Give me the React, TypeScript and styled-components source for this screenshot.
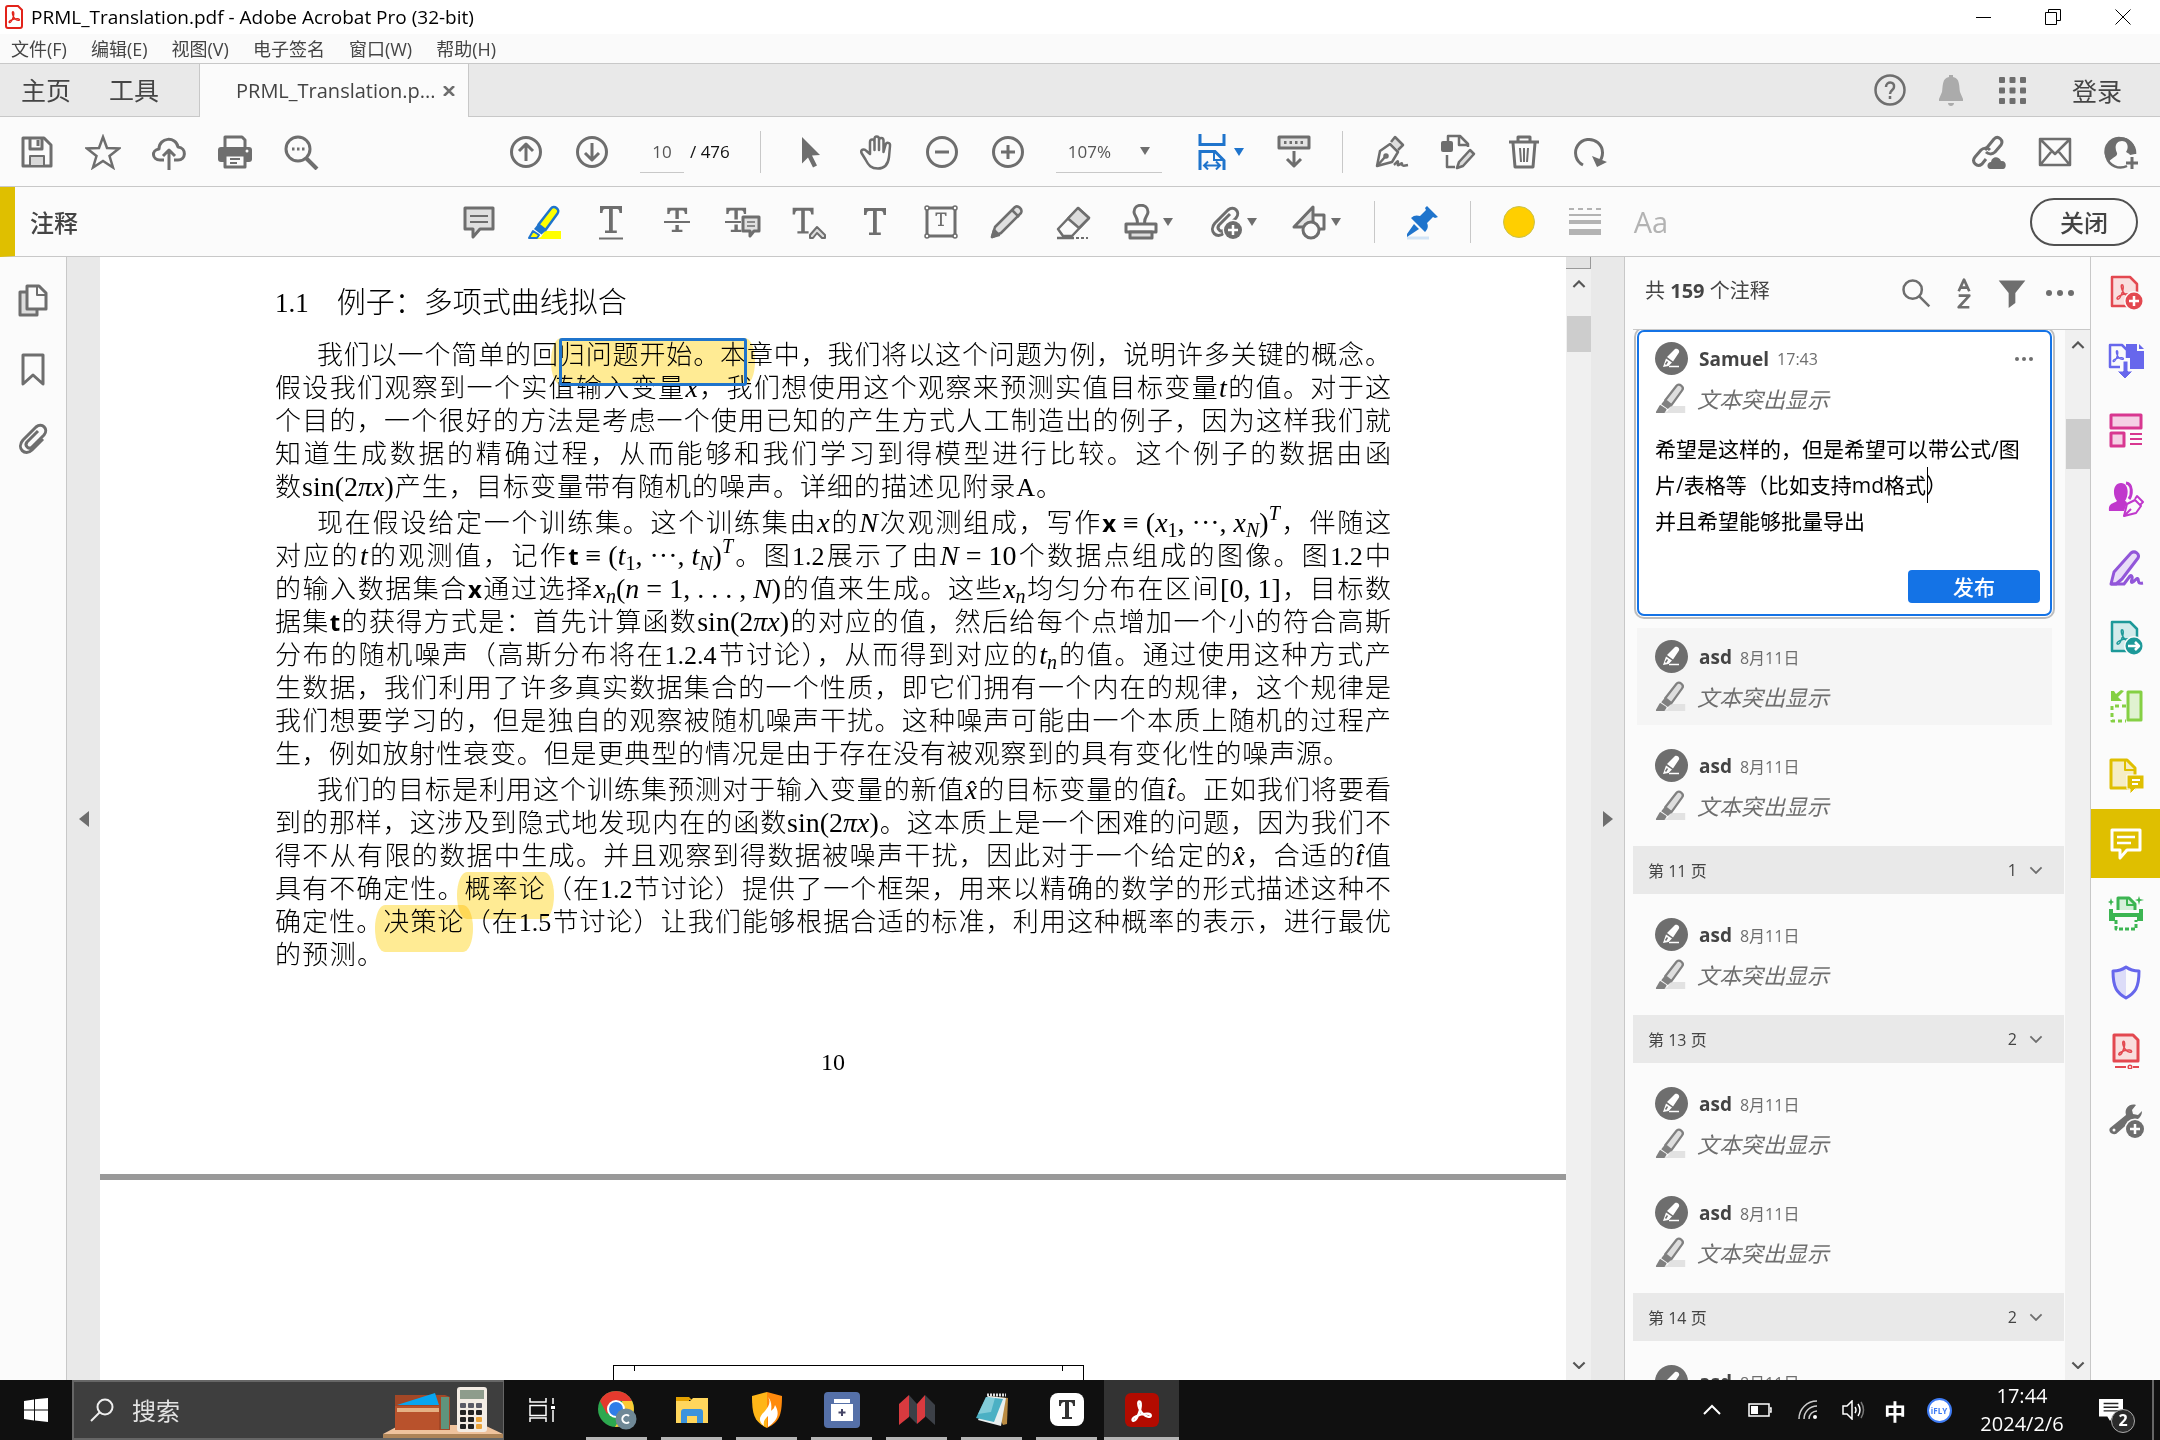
import React from "react";
import styled, { createGlobalStyle, css } from "styled-components";

const UI = `"Open Sans", "Noto Sans CJK SC", sans-serif`;
const SERIF = `"Liberation Serif", "Noto Sans CJK SC", serif`;
const GRAY = "#6e6e6e";
const LINE = "#c8c8c8";
const BLUE = "#1f74cc";
const GOLD = "#dfbf00";

const GlobalStyle = createGlobalStyle`
  *, *::before, *::after { box-sizing: border-box; }
  html, body { margin: 0; height: 100%; }
  body { font-family: ${UI}; color: #444; overflow: hidden; }
  button, input, select, textarea { font-family: inherit; color: inherit; }
  button { border: 0; background: none; padding: 0; }
  svg { display: block; flex: none; }
`;

const Window = styled.div`
  display: flex;
  flex-direction: column;
  height: 100vh;
  background: #fbfbfb;
`;

/* ---------- title bar and menus ---------- */
const TitleBar = styled.header`
  display: flex;
  align-items: center;
  height: 34px;
  padding-left: 5px;
  background: #fff;
  color: #000;
  font-size: 19px;
  line-height: 26px;
`;
const Title = styled.span`
  flex: 1;
  padding-left: 8px;
`;
const WindowButton = styled.button`
  display: flex;
  justify-content: center;
  align-items: center;
  width: 70px;
  height: 34px;
`;
const WindowButtons = styled.div`
  display: flex;
  margin-right: 2px;
`;
const MenuBar = styled.nav`
  display: flex;
  align-items: center;
  gap: 24px;
  height: 30px;
  padding: 0 11px;
  border-bottom: 1px solid ${LINE};
  background: #fafafa;
`;
const MenuItem = styled.button`
  font-size: 18px;
  line-height: 26px;
`;

/* ---------- tabs ---------- */
const TabBar = styled.div`
  display: flex;
  height: 53px;
  background: #e9e9e9;
`;
const TabSpace = styled.div`
  display: flex;
  align-items: center;
  border-bottom: 1px solid ${LINE};
`;
const HomeTabs = styled(TabSpace)`
  width: 199px;
  padding-left: 21px;
  gap: 38px;
`;
const HomeTab = styled.button`
  font-size: 25px;
  line-height: 32px;
`;
const FileTab = styled.div`
  display: flex;
  align-items: center;
  justify-content: space-between;
  width: 270px;
  padding: 0 11px 0 36px;
  border-left: 1px solid ${LINE};
  border-right: 1px solid ${LINE};
  background: #fbfbfb;
  font-size: 20px;
`;
const TabTools = styled(TabSpace)`
  flex: 1;
  justify-content: flex-end;
  padding-right: 38px;
`;
const SignIn = styled.button`
  margin-left: 29px;
  font-size: 25px;
`;

/* ---------- toolbars ---------- */
const ToolBar = styled.div`
  display: flex;
  align-items: center;
  height: 70px;
  border-bottom: 1px solid ${LINE};
`;
const ToolGroup = styled.div`
  display: flex;
  align-items: center;
`;
const StartGroup = styled(ToolGroup)`
  width: 493px;
  padding-left: 4px;
`;
const EndGroup = styled(ToolGroup)`
  margin-left: auto;
  padding-right: 6px;
`;
const Tool = styled.button<{ $w?: number }>`
  display: flex;
  align-items: center;
  justify-content: center;
  width: ${(p) => p.$w || 66}px;
  height: 48px;
`;
const CaretTool = styled(Tool)`
  width: 84px;
  gap: 4px;
`;
const Divider = styled.span<{ $l: number; $r: number }>`
  width: 1px;
  height: 42px;
  margin: 0 ${(p) => p.$r}px 0 ${(p) => p.$l}px;
  background: ${LINE};
`;
const PageField = styled.label`
  display: flex;
  align-items: center;
  margin-left: 15px;
  gap: 6px;
  color: #111;
  font-size: 17px;
`;
const PageInput = styled.input`
  width: 44px;
  height: 42px;
  border: 0;
  border-bottom: 1px solid ${LINE};
  background: none;
  color: #555;
  font-size: 17px;
  text-align: center;
`;
const ZoomField = styled.span`
  display: flex;
  align-items: center;
  width: 106px;
  height: 42px;
  margin: 0 15px;
  padding-right: 12px;
  border-bottom: 1px solid ${LINE};
`;
const ZoomSelect = styled.select`
  flex: 1;
  appearance: none;
  border: 0;
  background: none;
  padding-left: 12px;
  color: #555;
  font-size: 17px;
`;
const CommentBar = styled(ToolBar)`
  border-left: 15px solid ${GOLD};
`;
const BarTitle = styled.h1`
  width: 431px;
  margin: 0;
  padding-left: 15px;
  font-size: 24px;
  font-weight: 500;
`;
const CloseButton = styled.button`
  width: 108px;
  height: 48px;
  margin: 0 22px 0 auto;
  border: 2px solid #505050;
  border-radius: 24px;
  font-size: 24px;
  font-weight: 500;
`;
const TextStyleIcon = styled.span`
  color: #b3b3b3;
  font-size: 29px;
`;

/* ---------- body ---------- */
const Body = styled.main`
  display: flex;
  flex: 1;
  min-height: 0;
`;
const NavRail = styled.nav`
  display: flex;
  flex-direction: column;
  align-items: center;
  width: 67px;
  padding-top: 9px;
  border-right: 1px solid ${LINE};
`;
const NavButton = styled(Tool)`
  height: 69px;
`;
const Splitter = styled.button`
  display: flex;
  align-items: center;
  justify-content: center;
  width: 33px;
  background: #e9e9e9;
`;
const Viewer = styled.section`
  flex: 1;
  min-width: 0;
  overflow: hidden;
  background: #fff;
`;
const Page = styled.article`
  padding: 27px 175px 97px;
  border-bottom: 6px solid #999;
  color: #000;
  font-family: ${SERIF};
`;
const Heading = styled.h2`
  display: flex;
  gap: 28px;
  margin: 0 0 17px;
  font-size: 29px;
  font-weight: 300;
  line-height: 38px;
`;
const SectionNumber = styled.span`
  font-size: 27px;
`;
const Paragraph = styled.p`
  margin: 0 0 3px;
  font-size: 26px;
  font-weight: 300;
  line-height: 33px;
`;
const Line = styled.span<{ $indent?: boolean; $end?: number }>`
  display: block;
  height: 33px;
  padding-left: ${(p) => (p.$indent ? 42 : 0)}px;
  padding-right: ${(p) => p.$end || 0}px;
  text-align: justify;
  text-align-last: justify;
  white-space: nowrap;
`;
const Formula = styled.span`
  display: inline-block;
  font-size: 28px;
  line-height: 24px;
  white-space: pre;
  i { font-style: italic; }
  sub, sup { font-size: 20px; line-height: 0; }
  sub { vertical-align: -5px; }
  sup { vertical-align: 12px; }
  b { font-family: "Open Sans", sans-serif; font-size: 24px; font-weight: 700; line-height: 0; }
`;
const Mark = styled.mark<{ $framed?: boolean }>`
  position: relative;
  background: none;
  color: inherit;
  &::before {
    content: "";
    position: absolute;
    left: -8px;
    right: -8px;
    top: -3px;
    height: 47px;
    border-radius: 10px / 23px;
    background: #ffeb94;
    mix-blend-mode: multiply;
  }
  ${(p) =>
    p.$framed &&
    css`
      &::after {
        content: "";
        position: absolute;
        left: 0;
        right: 0;
        top: -3px;
        height: 48px;
        border: 3px solid ${BLUE};
        border-radius: 3px;
      }
    `}
`;
const PageNumber = styled.footer`
  margin-top: 75px;
  font-size: 24px;
  line-height: 30px;
  text-align: center;
`;
const NextPage = styled.div`
  padding: 185px 482px 0 513px;
`;
const Figure = styled.div`
  display: flex;
  justify-content: space-between;
  height: 200px;
  padding: 0 20px;
  border: 1px solid #000;
`;
const Tick = styled.span`
  width: 1px;
  height: 5px;
  background: #000;
`;

const ScrollTrack = styled.div`
  display: flex;
  flex-direction: column;
  align-items: center;
  width: 25px;
  background: #f0f0f0;
`;
const SplitBox = styled.span`
  width: 100%;
  height: 12px;
  border: solid #999;
  border-width: 0 1px 1px 0;
  background: #e3e3e3;
`;
const ScrollButton = styled.button`
  display: flex;
  align-items: center;
  justify-content: center;
  width: 24px;
  height: 30px;
`;
const Thumb = styled.span<{ $gap: number; $h: number }>`
  width: 24px;
  height: ${(p) => p.$h}px;
  margin: ${(p) => p.$gap}px 0 auto;
  background: #cdcdcd;
`;

/* ---------- comments ---------- */
const Panel = styled.aside`
  display: flex;
  flex-direction: column;
  width: 467px;
  border: solid ${LINE};
  border-width: 0 1px;
`;
const PanelHead = styled.div`
  display: flex;
  align-items: center;
  height: 73px;
  margin-left: 8px;
  padding: 0 6px 0 12px;
  border-bottom: 1px solid ${LINE};
`;
const Count = styled.h2`
  flex: 1;
  margin: 0;
  padding-bottom: 8px;
  font-size: 20px;
  font-weight: 400;
`;
const PanelBody = styled.div`
  display: flex;
  flex: 1;
  min-height: 0;
`;
const List = styled.div`
  display: flex;
  flex: 1;
  flex-direction: column;
  gap: 12px;
  overflow: hidden;
  padding: 0 1px 0 8px;
`;
const Card = styled.article<{ $hover?: boolean; $active?: boolean }>`
  flex: none;
  margin: 0 12px 0 4px;
  padding: 12px 18px;
  height: ${(p) => (p.$active ? "auto" : "97px")};
  background: ${(p) => (p.$active ? "#fff" : p.$hover ? "#f5f5f5" : "none")};
  ${(p) =>
    p.$active &&
    css`
      padding: 10px 10px 11px 16px;
      border: 2px solid #1473e6;
      border-radius: 7px;
      box-shadow: 0 0 0 1px #fff, 0 0 0 3px #bdbdbd;
    `}
`;
const CardRow = styled.div`
  display: flex;
  align-items: center;
  height: 33px;
`;
const KindRow = styled(CardRow)`
  margin-top: 6px;
  gap: 10px;
  color: ${GRAY};
  font-size: 22px;
  font-style: italic;
`;
const Author = styled.b`
  margin-left: 11px;
  font-size: 19px;
`;
const Time = styled.time`
  margin-left: 8px;
  color: ${GRAY};
  font-size: 16px;
`;
const More = styled.button`
  margin: 0 7px 0 auto;
`;
const Draft = styled.div`
  position: relative;
  margin-top: 17px;
`;
const DraftText = styled.textarea`
  display: block;
  width: 380px;
  height: 122px;
  padding: 0;
  border: 0;
  outline: 0;
  resize: none;
  overflow: hidden;
  background: none;
  color: #000;
  font-size: 21px;
  line-height: 36px;
`;
const TextCaret = styled.span`
  position: absolute;
  left: 272px;
  top: 36px;
  width: 1px;
  height: 36px;
  background: #000;
`;
const Post = styled.button`
  display: block;
  width: 132px;
  height: 33px;
  margin: 17px 0 0 auto;
  border-radius: 4px;
  background: #1473e6;
  color: #fff;
  font-size: 21px;
  font-weight: 500;
  line-height: 30px;
`;
const PageHead = styled.button`
  display: flex;
  flex: none;
  align-items: center;
  height: 48px;
  padding: 0 21px 0 15px;
  background: #e9e9e9;
  font-size: 16px;
  gap: 12px;
  span:first-child { margin-right: auto; }
`;
const ToolRail = styled.nav`
  width: 69px;
`;
const RailButton = styled.button<{ $on?: boolean }>`
  display: flex;
  align-items: center;
  justify-content: center;
  width: 69px;
  height: 69px;
  background: ${(p) => (p.$on ? GOLD : "none")};
`;

/* ---------- taskbar ---------- */
const TaskBar = styled.footer`
  display: flex;
  height: 60px;
  background: #101010;
  color: #fff;
`;
const Start = styled.button`
  display: flex;
  align-items: center;
  justify-content: center;
  width: 72px;
`;
const SearchBox = styled.label`
  display: flex;
  align-items: center;
  width: 432px;
  padding-left: 16px;
  border: 2px solid #666;
  border-right-width: 1px;
  background: #3e3e3e;
  overflow: hidden;
`;
const SearchInput = styled.input`
  flex: 1;
  min-width: 0;
  margin-left: 18px;
  padding: 0;
  border: 0;
  background: none;
  font-size: 24px;
  &::placeholder { color: #e3e3e3; opacity: 1; }
`;
const TaskApp = styled.button<{ $on?: boolean; $running?: boolean }>`
  display: flex;
  align-items: center;
  justify-content: center;
  width: 75px;
  background: linear-gradient(#b5b5b5, #b5b5b5) center bottom /
    ${(p) => (p.$on ? "100%" : p.$running ? "61px" : "0")} 3px no-repeat
    ${(p) => (p.$on ? "#333" : "transparent")};
`;
const Tray = styled.div`
  display: flex;
  align-items: center;
  margin-left: auto;
  padding-right: 6px;
`;
const TrayIcon = styled.button<{ $w: number }>`
  display: flex;
  align-items: center;
  justify-content: center;
  width: ${(p) => p.$w}px;
  height: 60px;
  font-size: 22px;
  font-weight: 700;
  color: #fff;
`;
const IFly = styled.span`
  width: 25px;
  height: 25px;
  border: 2px solid #3f7cf4;
  border-radius: 50%;
  background: #fff;
  color: #3f7cf4;
  font-size: 8px;
  line-height: 21px;
`;
const Clock = styled.time`
  width: 116px;
  font-size: 20px;
  line-height: 28px;
  text-align: center;
`;
const Notice = styled(TrayIcon)`
  position: relative;
  padding-right: 10px;
  border-right: 2px solid #666;
`;
const Badge = styled.span`
  position: absolute;
  left: 31px;
  top: 29px;
  width: 24px;
  height: 24px;
  border: 1px solid #aaa;
  border-radius: 50%;
  background: #2b2b2b;
  font-size: 16px;
  line-height: 21px;
`;

/* ---------- icons ---------- */
type IconProps = { children: React.ReactNode; color?: string; size?: number; sw?: number };
const Icon = ({ children, color = GRAY, size = 36, sw = 3 }: IconProps) => (
  <svg width={size} height={size} viewBox="0 0 36 36" fill="none" stroke={color} strokeWidth={sw} strokeLinejoin="round">
    {children}
  </svg>
);
const Caret = ({ color = GRAY }: { color?: string }) => (
  <svg width="10" height="8" viewBox="0 0 10 8"><path d="M0 0h10L5 8z" fill={color} /></svg>
);
const Side = ({ left }: { left?: boolean }) => (
  <svg width="10" height="16" viewBox="0 0 10 16"><path d={left ? "M10 0v16L0 8z" : "M0 0v16l10-8z"} fill={GRAY} /></svg>
);
const Chevron = ({ up, size = 14, color = "#555", sw = 3 }: { up?: boolean; size?: number; color?: string; sw?: number }) => (
  <svg width={size} height={size * 0.6} viewBox="0 0 20 12" fill="none" stroke={color} strokeWidth={sw}>
    <path d={up ? "M2 10l8-8 8 8" : "M2 2l8 8 8-8"} />
  </svg>
);
const TREFOIL = "M7 19c-2 1-3 3-1.500 3.500 2 .5 4.500-5 6-10 1-4 .5-7-.8-7s-1.200 3 0 6c1.500 4 5 7 8 7.500 3 .3 2.500-2.500-.5-2.700-3.500-.2-8 1-11.200 2.700z";
const Trefoil = ({ x, y, s, color, sw = 2 }: { x: number; y: number; s: number; color: string; sw?: number }) => (
  <path d={TREFOIL} transform={`translate(${x} ${y}) scale(${s})`} stroke={color} strokeWidth={sw} fill="none" />
);
const T = ({ x = 0, y = 0, s = 1 }: { x?: number; y?: number; s?: number }) => (
  <path
    transform={`translate(${x} ${y}) scale(${s})`}
    d="M7 3h22v7h-2.500c-.2-2.500-.8-4-2.500-4h-4.200v21.500h4V30H12v-2.500h4V6h-4c-1.700 0-2.300 1.500-2.500 4H7z"
    fill={GRAY} stroke="none"
  />
);
const HighlighterIcon = ({ stroke = "#808080", fill = "#dedede", ground = "#e2e2e2", size = 32 }) => (
  <Icon color={stroke} size={size} sw={2.5}>
    <path d="M14 33l4-6h16v8H8z" fill={ground} stroke="none" />
    <path d="M11.500 20.500L24 4.500c3-4 9.500 1 6.500 5L18.500 26z" fill={fill} />
    <path d="M11 20l8 6.500-4.500 4-7.500-5.500z" fill={stroke} stroke="none" />
    <path d="M6 27l6 4-2 3H2z" fill={fill === "#ffff00" ? fill : stroke} strokeWidth={2} />
  </Icon>
);
const AvatarIcon = () => (
  <svg width="33" height="33" viewBox="0 0 33 33">
    <circle cx="16.500" cy="16.500" r="16.500" fill={GRAY} />
    <path d="M12 15l8-8c2-1 5 1 4 3.500l-6 9zM11 16.500l6 4-3.500 3.500L8 25z" fill="#fff" />
    <path d="M14 24.500h10" stroke="#fff" strokeWidth="1.500" />
    <path d="M10.500 22.500l2-3" stroke={GRAY} strokeWidth="1.500" />
  </svg>
);
const Dots = ({ r = 3, gap = 12 }: { r?: number; gap?: number }) => (
  <svg width={gap * 2 + r * 2} height={r * 2}>
    {[0, 1, 2].map((i) => <circle key={i} cx={r + i * gap} cy={r} r={r} fill={GRAY} />)}
  </svg>
);
const ClipPath = () => <path d="M23 10L12 21c-3 4 2 8 5 5L29 14c5-6-2-13-8-8L8 19c-7 8 2 17 9 10l11-11" />;

const saveIcon = <Icon><path d="M4 4h21l7 7v21H4z" /><path d="M11 5v10h12V5" /><path d="M19 6v6" /><path d="M11 31V22h14v9" fill="#d9d9d9" strokeWidth={2} /></Icon>;
const starIcon = <Icon sw={2.500}><path d="M18 3l4 11 12 .5-9.500 7.500 3.500 11.500L18 27 8 33.500 11.500 22 2 14.500 14 14z" strokeLinejoin="miter" /></Icon>;
const cloudIcon = <Icon><path d="M13 26H9C1 26 0 16 8 15 8 3 25 2 27 13c9 1 8 13 0 13h-4" /><path d="M18 36V17M12 22l6-6 6 6" /></Icon>;
const printIcon = <Icon><path d="M8 14V3h17l3 3v8" /><path d="M4 13h28a3 3 0 013 3v9a3 3 0 01-3 3H4a3 3 0 01-3-3v-9a3 3 0 013-3z" fill={GRAY} stroke="none" /><path d="M8 21h20v12H8z" fill="#fbfbfb" /><path d="M13 25h10M13 29h7" strokeWidth={2} /><circle cx="30" cy="17" r="1.500" fill="#fff" stroke="none" /></Icon>;
const findIcon = <Icon><circle cx="15" cy="15" r="12" /><path d="M23 24l11 11" strokeWidth={4} /><path d="M9 15h2.500M14 15h2.500M19 15h2.500" /></Icon>;
const upIcon = <Icon><circle cx="18" cy="18" r="14.500" /><path d="M18 27V11M11 17l7-7 7 7" /></Icon>;
const downIcon = <Icon><circle cx="18" cy="18" r="14.500" /><path d="M18 9v16M11 19l7 7 7-7" /></Icon>;
const pointerIcon = <Icon><path d="M10 3l18 18-8 .5 5 10-4 2-5-10-6 6z" fill={GRAY} stroke="none" /></Icon>;
const handIcon = <Icon sw={2.500}><path d="M12 20V8c0-3.500 4.500-3.500 4.500 0v8V5c0-3.500 4.500-3.500 4.500 0v11V6.500c0-3.500 4.500-3.500 4.500 0V18l2-7c1-3.500 5-2.500 4.500 1L31 23c-1 8-5 11.500-11 11.500-7 0-9.500-3-12.500-9L3.500 19c-1.500-3 2.500-5 5-2z" /></Icon>;
const minusIcon = <Icon><circle cx="18" cy="18" r="14.500" /><path d="M11 18h14" /></Icon>;
const plusIcon = <Icon><circle cx="18" cy="18" r="14.500" /><path d="M11 18h14M18 11v14" /></Icon>;
const fitIcon = <svg width="36" height="36" viewBox="-4 0 36 36" fill="none" stroke={BLUE} strokeWidth="3"><path d="M2 0v10.500h24V0" /><path d="M2 36V17.500h15l9 9V36" /><path d="M16 17v9h9" strokeWidth="2" /><path d="M6 31.500h16M10 27.500l-4 4 4 4M18 27.500l4 4-4 4" strokeWidth="2" /></svg>;
const keysIcon = <Icon><path d="M3 3h30v11H3z" fill="#e3e3e3" /><path d="M8 8.500h2.500M13.500 8.500H16M19 8.500h2.500M24.500 8.500H27" /><path d="M18 17v15M11 25l7 7 7-7" /></Icon>;
const signIcon = <Icon sw={2.500}><path d="M3 32L6 17l10-7 8 8-6 10z" /><path d="M3 32l8-9" /><circle cx="12" cy="22" r="1.500" /><path d="M17 8l4-5 8 8-5 5" fill="#ddd" /><path d="M20 31c2-2 4-5 4-3s-1 4 1 3 3-3 3-1 1 2 6 1" /></Icon>;
const editPageIcon = <Icon sw={2.500}><path d="M8 12V2h12l8 8v3" /><path d="M19 3v8h8" /><rect x="1" y="7" width="12" height="11" rx="2" fill={GRAY} stroke="none" /><path d="M7 21v12h8" /><path d="M17 34l2-6 11-12 4 4-11 12z" fill="#ddd" strokeWidth={2.500} /></Icon>;
const trashIcon = <Icon><path d="M3 8h30M12 7V3h12v4" /><path d="M7 9l2 24h18l2-24" /><path d="M14 14l1 14M18 14v14M22 14l-1 14" strokeWidth={2} /></Icon>;
const rotateIcon = <Icon><path d="M11 31A13.500 13.500 0 1126 29" /><path d="M20 22l5 11 10-5z" fill={GRAY} stroke="none" /></Icon>;
const linkCloudIcon = <Icon sw={3}><path d="M14 16l9-11c4-4 10 1 7 6l-6 7c-3 3-7 2-9 0" /><path d="M19 16c-3-3-7-2-9 0l-6 7c-4 5 2 11 7 7l4-5" /><path d="M19 35c-4-1-3-7 1-7 1-6 8-6 10-1 6-1 6 8 2 8z" fill={GRAY} stroke="none" /></Icon>;
const mailIcon = <Icon sw={2.500}><path d="M3 5h30v26H3zM4 6l14 14L32 6M4 30l10-12M32 30L22 18" /></Icon>;
const userIcon = <Icon><path d="M24 32A14.500 14.500 0 1132 20" strokeWidth={2.500} /><path d="M6 28A14.500 14.500 0 0118 3a14.500 14.500 0 0114 17l-5 1c-1-2-3-2-4-3 3-4 2-11-4-11s-8 6-5 12c1 4-5 4-8 9z" fill={GRAY} stroke="none" /><path d="M29 23v12M23 29h12" /></Icon>;

const noteIcon = <Icon><path d="M4 4h28v21H19l-7 8v-8H4z" fill="#e0e0e0" /><path d="M9 12h18M9 18h18" strokeWidth={2} /></Icon>;
const underlineIcon = <Icon><T y={-1} /><path d="M6 34.500h24" strokeWidth={2} /></Icon>;
const strikeIcon = <Icon><T x={2} y={1} s={0.900} /><path d="M4 18h28" stroke="#fbfbfb" strokeWidth={6} /><path d="M5 18h26" strokeWidth={2} /></Icon>;
const replaceIcon = <Icon><T x={-5} y={1} s={0.900} /><path d="M0 18h16" stroke="#fbfbfb" strokeWidth={5} /><path d="M0 18h16" strokeWidth={2} /><path d="M18 13h16v14h-5l-4 5v-5h-7z" fill="#e0e0e0" /><path d="M22 18h8M22 22h8" strokeWidth={1.500} /></Icon>;
const insertIcon = <Icon><T x={-5} y={1} s={0.950} /><path d="M19 34v-3l7-8 8 8v3h-3l-5-5-4 5z" fill="#ddd" strokeWidth={2} /></Icon>;
const textIcon = <Icon><T y={1} s={1} /></Icon>;
const textBoxIcon = <Icon><path d="M4 4h28v28H4z" fill="#fbfbfb" /><T x={9} y={7} s={0.500} />{[[4, 4], [32, 4], [4, 32], [32, 32]].map(([x, y]) => <circle key={x * 40 + y} cx={x} cy={y} r="2" fill="#fff" strokeWidth={1.500} />)}</Icon>;
const pencilIcon = <Icon sw={2.500}><path d="M3 33l3-10L26 3c3-2 8 2 6 6L12 29z" fill="#e0e0e0" /><path d="M3 33l2-7 5 5z" fill={GRAY} /><path d="M23 6l7 7" /></Icon>;
const eraserIcon = <Icon sw={2.500}><path d="M3 25L23 4l11 10-17 18H8z" /><path d="M13 14.500L23 4l11 10-10 10z" fill="#ddd" /><path d="M2 34h17" /><path d="M21 34h12" strokeDasharray="3 2" strokeWidth={2} /></Icon>;
const stampIcon = <Icon><path d="M14 20c2-6-3-8-3-12 0-9 14-9 14 0 0 4-5 6-3 12" /><path d="M3 20h30v8H3z" /><path d="M7 28h22v6H7z" fill="#ddd" /></Icon>;
const attachIcon = <Icon><ClipPath /><circle cx="26" cy="26" r="10.500" fill="#fbfbfb" stroke="none" /><circle cx="26" cy="26" r="9" fill={GRAY} stroke="none" /><path d="M26 21v10M21 26h10" stroke="#fff" strokeWidth={2.500} /></Icon>;
const shapesIcon = <Icon><path d="M22 3v20H3z" fill="#e3e3e3" /><path d="M22 11h11v14H22" /><circle cx="20" cy="26" r="8" fill="#fbfbfb" /></Icon>;
const pinIcon = <Icon><path d="M3 34h22" stroke="#d3e4f5" /><path d="M23 2l11 11-3 1-2-1-6 6c2 4 0 7-2 9L7 14c3-3 6-3 9-2l6-6-1-2zM10 20l5 5L3 33v-3z" fill={BLUE} stroke="none" /></Icon>;
const colorIcon = <Icon sw={1}><circle cx="18" cy="18" r="15.500" fill="#ffcf00" stroke="#c9c14d" /></Icon>;
const linesIcon = <Icon color="#b3b3b3"><path d="M2 5h32" strokeWidth={2} strokeDasharray="5 4" /><path d="M2 11h32" strokeWidth={2} /><path d="M2 18h32" strokeWidth={4} /><path d="M2 28h32" strokeWidth={6} /></Icon>;

const pagesIcon = <Icon sw={3}><path d="M12 9H5v23h17v-5" fill="#ddd" /><path d="M12 3h12l7 7v16H12z" fill="#fbfbfb" /><path d="M22 4v8h8" strokeWidth={2} /></Icon>;
const bookmarkIcon = <Icon><path d="M8 3h20v29l-10-9-10 9z" /></Icon>;
const clipIcon = <Icon><ClipPath /></Icon>;

const PdfSheet = ({ color, tint }: { color: string; tint: string }) => (
  <>
    <path d="M4 3h18l7 7v22H4z" fill={tint} />
    <Trefoil x={5} y={6} s={0.850} color={color} sw={1.800} />
  </>
);
const RED = "#e34850";
const TEAL = "#1d9999";
const VIOLET = "#6767ec";
const PINK = "#d83790";
const railIcons: { name: string; icon: React.ReactNode; on?: boolean }[] = [
  { name: "创建 PDF", icon: <Icon color={RED} sw={2.500}><PdfSheet color={RED} tint="#f9dede" /><circle cx="26" cy="27" r="10" fill="#fbfbfb" stroke="none" /><circle cx="26" cy="27" r="8.500" fill={RED} stroke="none" /><path d="M26 22v10M21 27h10" stroke="#fff" /></Icon> },
  { name: "合并文件", icon: <Icon color={VIOLET} sw={2.500}><path d="M18 1h11v7h7v18H22V15h-4z" fill={VIOLET} stroke="none" /><path d="M31 1l5 5h-5z" fill={VIOLET} stroke="none" /><path d="M12 24H2V2h12l5 5v8" fill="#fbfbfb" /><Trefoil x={2} y={4} s={0.650} color={VIOLET} /><path d="M15 18h5v10h5l-8 8-8-8h6z" fill={VIOLET} stroke="#fbfbfb" strokeWidth={1} /></Icon> },
  { name: "组织页面", icon: <Icon color={PINK}><path d="M3 3h30v13H3zM3 21h13v13H3z" fill="#f5d0e5" /><path d="M22 22h12M22 27h12M22 32h12" strokeWidth={2} /></Icon> },
  { name: "请求签名", icon: <Icon color="#c038cc" sw={2}><path d="M1 30c-1-8 4-7 8-10-5-6-4-18 4-18s8 12 4 18c3 1 2 2-1 10z" fill="#c038cc" stroke="none" /><path d="M18 2c7 1 6 12 3 16" strokeWidth={3} /><path d="M16 35l3-12 8-4 6 6-5 7z" fill="#fbfbfb" /><path d="M16 35l7-7M27 18l2-3 6 6-3 3" /></Icon> },
  { name: "填写和签名", icon: <Icon color="#9256d9"><path d="M3 34l3-12L23 3c4-3 9 1 7 5L14 29l-6 5z" fill="#e9ddf7" /><path d="M3 34h13l6-8c1-1 3 0 2 3s-1 4 1 3 4-5 5-3-1 5 5 4" /></Icon> },
  { name: "导出 PDF", icon: <Icon color={TEAL} sw={2.500}><PdfSheet color={TEAL} tint="#d2ebeb" /><circle cx="26" cy="27" r="10" fill="#fbfbfb" stroke="none" /><circle cx="26" cy="27" r="8.500" fill={TEAL} stroke="none" /><path d="M20 27h11M27 23l4 4-4 4" stroke="#fff" /></Icon> },
  { name: "裁剪", icon: <Icon color="#85d044"><path d="M20 4h13v28H20z" fill="#e0f2d1" /><path d="M18 18H4v15h14" strokeDasharray="4 3" /><path d="M3 13V3h3l2 3 5-4 3 1-6 6 4 4z" fill="#85d044" stroke="none" /></Icon> },
  { name: "发送以供注释", icon: <Icon color={GOLD}><path d="M3 3h16l8 8v20H3z" fill="#f5edc5" /><path d="M17 4v9h9" strokeWidth={2} /><path d="M19 18h17v14H27l-5 5v-5h-3z" fill={GOLD} stroke="#fbfbfb" strokeWidth={1} /><path d="M24 23h8M24 27h6" stroke="#fff" strokeWidth={2} /></Icon> },
  { name: "注释", on: true, icon: <Icon color="#fff"><path d="M4 4h28v20H19l-7 8v-8H4z" /><path d="M9 11h18M9 17h14" strokeWidth={2.500} /></Icon> },
  { name: "扫描和 OCR", icon: <Icon color="#3cb552"><path d="M10 15V3h11l6 6v6" fill="#d5efda" /><path d="M19 4v6h7" strokeWidth={2} /><path d="M1 14h4v4h26v-4h4v12h-6v-4H7v4H1z" fill="#3cb552" stroke="none" /><path d="M8 25v9h20v-9" strokeDasharray="4 2" /><path d="M31 1l1 3 4 1-4 1-1 4-1-4-3-1 3-1zM3 3l1 3 2 1-2 1-1 3-1-3-2-1 2-1z" fill="#3cb552" stroke="none" /></Icon> },
  { name: "保护", icon: <Icon color={VIOLET}><path d="M18 3v30C9 29 5 24 5 7c5 0 9-1 13-4z" fill="#dcdcf8" stroke="none" /><path d="M18 3c4 3 8 4 13 4 0 17-4 22-13 27C9 29 5 24 5 7c5 0 9-1 13-4z" /></Icon> },
  { name: "优化 PDF", icon: <Icon color={RED}><path d="M6 2h19l5 5v21H6z" fill="#f9dede" /><Trefoil x={7} y={4} s={0.800} color={RED} /><path d="M7 34h11M25 34h6" strokeWidth={2} /><circle cx="22" cy="34" r="1.800" strokeWidth={1.500} /></Icon> },
  { name: "更多工具", icon: <Icon><path d="M2 26L18 13c-2-7 4-12 10-10l-4 5 1 4 5 1 4-4c0 7-6 10-10 9L8 32c-5 1-8-3-6-6z" fill={GRAY} stroke="none" /><circle cx="6" cy="28" r="1.500" fill="#fff" stroke="none" /><circle cx="27" cy="27" r="10.500" fill="#fbfbfb" stroke="none" /><circle cx="27" cy="27" r="9" fill={GRAY} stroke="none" /><path d="M27 22v10M22 27h10" stroke="#fff" strokeWidth={2.500} /></Icon> },
];

/* taskbar drawings */
const DeskArt = () => (
  <svg width="120" height="60" viewBox="0 0 120 60">
    <path d="M0 54l17-9h84l19 9v6H0z" fill="#efc39d" /><path d="M0 54h120v6H0z" fill="#ad8458" />
    <path d="M12 15h50l5 2v33H12z" fill="#a34726" /><path d="M58 17h8v32h-8z" fill="#5f947c" />
    <path d="M14 25l38-12 4 12z" fill="#08a5f0" /><path d="M12 26h44v24H12z" fill="#b9522c" />
    <path d="M14 28h42v4H14z" fill="#e5b184" />
    <rect x="74" y="7" width="30" height="45" rx="3" fill="#f3ece4" /><rect x="77" y="10" width="24" height="9" fill="#8e9c8c" />
    {[0, 1, 2, 3].map((r) => [0, 1, 2].map((c) => (
      <rect key={r * 3 + c} x={77 + c * 8} y={23 + r * 7} width="6" height="5" rx="1" fill={c === 2 && r > 1 ? "#e9a33a" : r ? "#222" : "#5b5b66"} />
    )))}
  </svg>
);
const chromeIcon = <svg width="40" height="40" viewBox="0 0 40 40"><circle cx="19" cy="19" r="18" fill="#2da84f" /><path d="M19 1a18 18 0 0116 10H19L10 24 3 11A18 18 0 0119 1z" fill="#e53a2e" /><path d="M35 11a18 18 0 01-17 26l9-15-2-11z" fill="#fcc934" /><circle cx="19" cy="19" r="9" fill="#fff" /><circle cx="19" cy="19" r="7" fill="#2f7de9" /><circle cx="29" cy="29" r="10.500" fill="#6f8896" /><path d="M32 26a4 4 0 100 6" fill="none" stroke="#fff" strokeWidth="2" /></svg>;
const folderIcon = <svg width="34" height="30" viewBox="0 0 34 30"><path d="M1 2h13l3 3h-3v5H1z" fill="#e3a100" /><path d="M1 6h14l3-3h15v25H1z" fill="#ffd65c" /><path d="M6 28V17c0-2 1-3 3-3h16c2 0 3 1 3 3v11h-6v-7H12v7z" fill="#3b93dc" /></svg>;
const shieldIcon = <svg width="32" height="36" viewBox="0 0 32 36"><path d="M1 4L16 0v36C4 30 1 24 1 4z" fill="#ffb618" /><path d="M16 0l15 4c0 20-3 26-15 32z" fill="#ff8a0c" /><path d="M17 5c3 5 1 9-3 14-5 5-8 9-1 15-1-5 1-7 4-10v11c8-6 13-12 7-22-1 4-2 4-4 6 1-6 0-11-3-14z" fill="#fff" /></svg>;
const jarIcon = <svg width="36" height="36" viewBox="0 0 36 36"><rect width="36" height="36" rx="4" fill="#5570a8" /><path d="M10 7h16v4H10zM7 12h22v17H7z" fill="#fff" /><path d="M18 17v7M14.500 20.500h7" stroke="#446" strokeWidth="2" /></svg>;
const mIcon = <svg width="38" height="32" viewBox="0 0 38 32"><path d="M1 10L11 1v22L1 31z" fill="#d93a3f" /><path d="M11 1l8 9v20l-8-8z" fill="#3c4047" /><path d="M19 10l8-9v22l-8 7z" fill="#d93a3f" /><path d="M27 1l10 10v20l-10-9z" fill="#3c4047" /></svg>;
const notepadIcon = <svg width="36" height="34" viewBox="0 0 36 34"><path d="M14 3l20 2-1 26-4 1z" fill="#b98b43" /><path d="M14 3l18 2-5 28-23-6z" fill="#e9eff0" /><path d="M12 4l17 2-9 23-18-4z" fill="#4bb0c4" /><path d="M12 4l9 1-4 14-13 2z" fill="#a6dfe8" opacity=".6" /><path d="M13 2h19" stroke="#ddd" strokeWidth="3" strokeDasharray="2 1" /></svg>;
const typoraIcon = <svg width="36" height="36" viewBox="0 0 36 36"><rect x="1" y="1" width="34" height="33" rx="8" fill="#fff" /><path d="M10 8h16v6h-2c0-3-1-4-4-4v15h3v2H13v-2h3V10c-3 0-4 1-4 4h-2z" fill="#333" /></svg>;
const acrobatTask = <svg width="34" height="34" viewBox="0 0 34 34"><rect width="34" height="34" rx="6" fill="#b30b00" /><Trefoil x={2} y={2} s={1.150} color="#fff" /></svg>;
const taskViewIcon = <svg width="26" height="26" viewBox="0 0 26 26" fill="none" stroke="#fff" strokeWidth="1.500"><path d="M1 1v4h16V1M1 8.500h16v10H1zM1 25v-4h16v4M24 1v6M24 13v12" /><path d="M22 9h4v3h-4z" fill="#fff" stroke="none" /></svg>;

/* ---------- content ---------- */
const Sin = () => <Formula>sin(2<i>πx</i>)</Formula>;
const V = ({ n, sub }: { n: string; sub?: string }) => <Formula><i>{n}</i>{sub && <sub><i>{sub}</i></sub>}</Formula>;
const Vector = ({ n }: { n: string }) => (
  <Formula><b>{n}</b> ≡ (<i>{n}</i><sub>1</sub>, ···, <i>{n}</i><sub><i>N</i></sub>)<sup><i>T</i></sup></Formula>
);

const Comment = ({ hover }: { hover?: boolean }) => (
  <Card $hover={hover}>
    <CardRow><AvatarIcon /><Author>asd</Author><Time>8月11日</Time></CardRow>
    <KindRow><HighlighterIcon />文本突出显示</KindRow>
  </Card>
);
const PageGroup = ({ page, count }: { page: number; count: number }) => (
  <PageHead><span>第 {page} 页</span><span>{count}</span><Chevron size={14} color={GRAY} sw={2.500} /></PageHead>
);

export default function App() {
  return (
    <Window>
      <GlobalStyle />
      <TitleBar>
        <svg width="18" height="24" viewBox="0 0 18 24" fill="none" stroke="#e2231a" strokeWidth="2">
          <path d="M3 1h10l4 4v16a2 2 0 01-2 2H3a2 2 0 01-2-2V3a2 2 0 012-2z" />
          <Trefoil x={1} y={3} s={0.650} color="#e2231a" />
        </svg>
        <Title>PRML_Translation.pdf - Adobe Acrobat Pro (32-bit)</Title>
        <WindowButtons>
          <WindowButton aria-label="最小化"><svg width="15" height="15" stroke="#000"><path d="M0 7.500h15" /></svg></WindowButton>
          <WindowButton aria-label="还原"><svg width="16" height="16" stroke="#000" fill="none"><path d="M.5 3.500h11v12H.5zM3.500 3V.5h12v11H12" /></svg></WindowButton>
          <WindowButton aria-label="关闭窗口"><svg width="16" height="16" stroke="#000"><path d="M.5.5l15 15M15.500.5l-15 15" /></svg></WindowButton>
        </WindowButtons>
      </TitleBar>
      <MenuBar>
        {["文件(F)", "编辑(E)", "视图(V)", "电子签名", "窗口(W)", "帮助(H)"].map((m) => <MenuItem key={m}>{m}</MenuItem>)}
      </MenuBar>
      <TabBar>
        <HomeTabs><HomeTab>主页</HomeTab><HomeTab>工具</HomeTab></HomeTabs>
        <FileTab>
          <span>PRML_Translation.p...</span>
          <button aria-label="关闭标签"><svg width="16" height="10" viewBox="0 0 16 10" stroke={GRAY} strokeWidth="2.500"><path d="M3 0l10 10M13 0L3 10" /></svg></button>
        </FileTab>
        <TabTools>
          <Tool $w={61} aria-label="帮助"><Icon sw={2.500}><circle cx="18" cy="18" r="14.500" /><path d="M14 15c0-6 9-6 8 0 0 3-4 3-4 7M18 24v3" /></Icon></Tool>
          <Tool $w={61} aria-label="通知"><Icon><path d="M16 3h4v2c7 1 6 9 7 15l3 7v2H6v-2l3-7c1-6 0-14 7-15zM15 31h6c0 4-6 4-6 0z" fill="#ababab" stroke="none" /></Icon></Tool>
          <Tool $w={61} aria-label="应用"><svg width="27" height="27" viewBox="0 0 27 27" fill={GRAY}>{[0, 1, 2].map((r) => [0, 1, 2].map((c) => <rect key={r * 3 + c} x={c * 10.500} y={r * 10.500} width="6" height="6" rx="1" />))}</svg></Tool>
          <SignIn>登录</SignIn>
        </TabTools>
      </TabBar>

      <ToolBar>
        <StartGroup>
          <Tool aria-label="保存">{saveIcon}</Tool>
          <Tool aria-label="收藏">{starIcon}</Tool>
          <Tool aria-label="上传">{cloudIcon}</Tool>
          <Tool aria-label="打印">{printIcon}</Tool>
          <Tool aria-label="查找">{findIcon}</Tool>
        </StartGroup>
        <ToolGroup>
          <Tool aria-label="上一页">{upIcon}</Tool>
          <Tool aria-label="下一页">{downIcon}</Tool>
          <PageField><PageInput defaultValue="10" aria-label="页码" />/ 476</PageField>
          <Divider $l={30} $r={16} />
          <Tool aria-label="选择">{pointerIcon}</Tool>
          <Tool aria-label="手形">{handIcon}</Tool>
          <Tool aria-label="缩小">{minusIcon}</Tool>
          <Tool aria-label="放大">{plusIcon}</Tool>
          <ZoomField><ZoomSelect aria-label="缩放" defaultValue="107%"><option>107%</option></ZoomSelect><Caret /></ZoomField>
          <CaretTool aria-label="适合宽度">{fitIcon}<Caret color={BLUE} /></CaretTool>
          <Tool aria-label="键盘">{keysIcon}</Tool>
          <Divider $l={15} $r={16} />
          <Tool aria-label="签名">{signIcon}</Tool>
          <Tool aria-label="编辑">{editPageIcon}</Tool>
          <Tool aria-label="删除">{trashIcon}</Tool>
          <Tool aria-label="旋转">{rotateIcon}</Tool>
        </ToolGroup>
        <EndGroup>
          <Tool aria-label="链接">{linkCloudIcon}</Tool>
          <Tool aria-label="邮件">{mailIcon}</Tool>
          <Tool aria-label="共享">{userIcon}</Tool>
        </EndGroup>
      </ToolBar>

      <CommentBar>
        <BarTitle>注释</BarTitle>
        <ToolGroup>
          <Tool aria-label="添加附注">{noteIcon}</Tool>
          <Tool aria-label="突出显示"><HighlighterIcon stroke={BLUE} fill="#ffff00" ground="#ffff00" size={36} /></Tool>
          <Tool aria-label="下划线">{underlineIcon}</Tool>
          <Tool aria-label="删除线">{strikeIcon}</Tool>
          <Tool aria-label="替换文本">{replaceIcon}</Tool>
          <Tool aria-label="插入文本">{insertIcon}</Tool>
          <Tool aria-label="添加文本">{textIcon}</Tool>
          <Tool aria-label="文本框">{textBoxIcon}</Tool>
          <Tool aria-label="铅笔">{pencilIcon}</Tool>
          <Tool aria-label="橡皮擦">{eraserIcon}</Tool>
          <CaretTool aria-label="图章">{stampIcon}<Caret /></CaretTool>
          <CaretTool aria-label="附件">{attachIcon}<Caret /></CaretTool>
          <CaretTool aria-label="绘图">{shapesIcon}<Caret /></CaretTool>
          <Divider $l={16} $r={14} />
          <Tool aria-label="固定">{pinIcon}</Tool>
          <Divider $l={15} $r={15} />
          <Tool aria-label="颜色">{colorIcon}</Tool>
          <Tool aria-label="线宽">{linesIcon}</Tool>
          <Tool aria-label="文本属性"><TextStyleIcon>Aa</TextStyleIcon></Tool>
        </ToolGroup>
        <CloseButton>关闭</CloseButton>
      </CommentBar>

      <Body>
        <NavRail>
          <NavButton aria-label="页面缩略图">{pagesIcon}</NavButton>
          <NavButton aria-label="书签">{bookmarkIcon}</NavButton>
          <NavButton aria-label="附件">{clipIcon}</NavButton>
        </NavRail>
        <Splitter aria-label="展开导览"><Side left /></Splitter>
        <Viewer>
          <Page>
            <Heading><SectionNumber>1.1</SectionNumber><span>例子：多项式曲线拟合</span></Heading>
            <Paragraph>
              <Line $indent>我们以一个简单的回<Mark $framed>归问题开始。本</Mark>章中，我们将以这个问题为例，说明许多关键的概念。</Line>
              <Line>假设我们观察到一个实值输入变量<V n="x" />，我们想使用这个观察来预测实值目标变量<V n="t" />的值。对于这</Line>
              <Line>个目的，一个很好的方法是考虑一个使用已知的产生方式人工制造出的例子，因为这样我们就</Line>
              <Line>知道生成数据的精确过程，从而能够和我们学习到得模型进行比较。这个例子的数据由函</Line>
              <Line $end={329}>数<Sin />产生，目标变量带有随机的噪声。详细的描述见附录A。</Line>
            </Paragraph>
            <Paragraph>
              <Line $indent>现在假设给定一个训练集。这个训练集由<V n="x" />的<V n="N" />次观测组成，写作<Vector n="x" />，伴随这</Line>
              <Line>对应的<V n="t" />的观测值，记作<Vector n="t" />。图1.2展示了由<Formula><i>N</i> = 10</Formula>个数据点组成的图像。图1.2中</Line>
              <Line>的输入数据集合<Formula><b>x</b></Formula>通过选择<V n="x" sub="n" /><Formula>(<i>n</i> = 1, . . . , <i>N</i>)</Formula>的值来生成。这些<V n="x" sub="n" />均匀分布在区间<Formula>[0, 1]</Formula>，目标数</Line>
              <Line>据集<Formula><b>t</b></Formula>的获得方式是：首先计算函数<Sin />的对应的值，然后给每个点增加一个小的符合高斯</Line>
              <Line>分布的随机噪声（高斯分布将在1.2.4节讨论），从而得到对应的<V n="t" sub="n" />的值。通过使用这种方式产</Line>
              <Line>生数据，我们利用了许多真实数据集合的一个性质，即它们拥有一个内在的规律，这个规律是</Line>
              <Line>我们想要学习的，但是独自的观察被随机噪声干扰。这种噪声可能由一个本质上随机的过程产</Line>
              <Line $end={42}>生，例如放射性衰变。但是更典型的情况是由于存在没有被观察到的具有变化性的噪声源。</Line>
            </Paragraph>
            <Paragraph>
              <Line $indent>我们的目标是利用这个训练集预测对于输入变量的新值<V n={"x\u0302"} />的目标变量的值<V n={"t\u0302"} />。正如我们将要看</Line>
              <Line>到的那样，这涉及到隐式地发现内在的函数<Sin />。这本质上是一个困难的问题，因为我们不</Line>
              <Line>得不从有限的数据中生成。并且观察到得数据被噪声干扰，因此对于一个给定的<V n={"x\u0302"} />，合适的<V n={"t\u0302"} />值</Line>
              <Line>具有不确定性。<Mark>概率论</Mark>（在1.2节讨论）提供了一个框架，用来以精确的数学的形式描述这种不</Line>
              <Line>确定性。<Mark>决策论</Mark>（在1.5节讨论）让我们能够根据合适的标准，利用这种概率的表示，进行最优</Line>
              <Line $end={1008}>的预测。</Line>
            </Paragraph>
            <PageNumber>10</PageNumber>
          </Page>
          <NextPage><Figure><Tick /><Tick /></Figure></NextPage>
        </Viewer>
        <ScrollTrack>
          <SplitBox />
          <ScrollButton aria-label="向上滚动"><Chevron up /></ScrollButton>
          <Thumb $gap={17} $h={36} />
          <ScrollButton aria-label="向下滚动"><Chevron /></ScrollButton>
        </ScrollTrack>
        <Splitter aria-label="折叠面板"><Side /></Splitter>

        <Panel>
          <PanelHead>
            <Count>共 <b>159</b> 个注释</Count>
            <Tool $w={48} aria-label="搜索注释"><Icon size={30}><circle cx="14" cy="14" r="11" /><path d="M22 22l12 12" /></Icon></Tool>
            <Tool $w={48} aria-label="排序"><Icon size={32}><path d="M12 16l6-13 6 13M14 12h8M12 21h12L12 34h12" /></Icon></Tool>
            <Tool $w={48} aria-label="筛选"><Icon size={30}><path d="M2 3h32L22 18v12l-8 6V18z" fill={GRAY} stroke="none" /></Icon></Tool>
            <Tool $w={48} aria-label="选项"><Dots r={3} gap={11} /></Tool>
          </PanelHead>
          <PanelBody>
            <List>
              <Card $active>
                <CardRow><AvatarIcon /><Author>Samuel</Author><Time>17:43</Time><More aria-label="更多"><Dots r={2} gap={7} /></More></CardRow>
                <KindRow><HighlighterIcon />文本突出显示</KindRow>
                <Draft>
                  <DraftText aria-label="注释内容" defaultValue={"希望是这样的，但是希望可以带公式/图片/表格等（比如支持md格式）\n并且希望能够批量导出"} />
                  <TextCaret />
                </Draft>
                <Post>发布</Post>
              </Card>
              <Comment hover />
              <Comment />
              <PageGroup page={11} count={1} />
              <Comment />
              <PageGroup page={13} count={2} />
              <Comment />
              <Comment />
              <PageGroup page={14} count={2} />
              <Comment />
            </List>
            <ScrollTrack>
              <ScrollButton aria-label="列表向上"><Chevron up /></ScrollButton>
              <Thumb $gap={59} $h={50} />
              <ScrollButton aria-label="列表向下"><Chevron /></ScrollButton>
            </ScrollTrack>
          </PanelBody>
        </Panel>
        <ToolRail>
          {railIcons.map((r) => <RailButton key={r.name} aria-label={r.name} $on={r.on}>{r.icon}</RailButton>)}
        </ToolRail>
      </Body>

      <TaskBar>
        <Start aria-label="开始"><svg width="24" height="24" viewBox="0 0 24 24" fill="#fff"><path d="M0 3l10-1.500V11.500H0zM11 1.300L24 0v11.500H11zM0 12.500h10v10L0 21zM11 12.500h13V24l-13-1.500z" /></svg></Start>
        <SearchBox>
          <svg width="24" height="24" viewBox="0 0 24 24" fill="none" stroke="#eee" strokeWidth="2"><circle cx="15" cy="9" r="7.500" /><path d="M10 14L1 23" /></svg>
          <SearchInput placeholder="搜索" aria-label="搜索" />
          <DeskArt />
        </SearchBox>
        <TaskApp aria-label="任务视图">{taskViewIcon}</TaskApp>
        {[["Chrome", chromeIcon], ["文件资源管理器", folderIcon], ["安全", shieldIcon], ["工具箱", jarIcon], ["地图", mIcon], ["记事本", notepadIcon], ["Typora", typoraIcon]].map(([n, i]) => <TaskApp key={n as string} $running aria-label={n as string}>{i}</TaskApp>)}
        <TaskApp $on aria-label="Acrobat">{acrobatTask}</TaskApp>
        <Tray>
          <TrayIcon $w={48} aria-label="隐藏的图标"><Chevron up size={20} color="#fff" sw={2} /></TrayIcon>
          <TrayIcon $w={48} aria-label="电池"><svg width="24" height="14" fill="none" stroke="#fff" strokeWidth="1.500"><path d="M1 1h20v12H1zM22 5h1v4h-1" /><path d="M3 3h7v8H3z" fill="#fff" stroke="none" /></svg></TrayIcon>
          <TrayIcon $w={48} aria-label="网络"><svg width="20" height="20" fill="none" stroke="#ccc" strokeWidth="1.500"><path d="M1 19A18 18 0 0119 1M6 19A13 13 0 0119 6M11 19a8 8 0 018-8" /><circle cx="17" cy="17" r="2" fill="#fff" stroke="none" /></svg></TrayIcon>
          <TrayIcon $w={44} aria-label="音量"><svg width="24" height="20" fill="none" stroke="#fff" strokeWidth="1.500"><path d="M1 6h4l5-5v18l-5-5H1zM13 7q2 3 0 6M16 4q4 6 0 12" /><path d="M19 2q5 8 0 16" stroke="#777" /></svg></TrayIcon>
          <TrayIcon $w={38} aria-label="输入法">中</TrayIcon>
          <TrayIcon $w={50} aria-label="讯飞"><IFly>iFLY</IFly></TrayIcon>
          <Clock>17:44<br />2024/2/6</Clock>
          <Notice $w={74} aria-label="操作中心">
            <svg width="24" height="24" viewBox="0 0 26 24"><path d="M0 0h26v19H15l-3 5-3-5H0z" fill="#fff" /><path d="M5 5h16M5 9h16M5 13h16" stroke="#222" strokeWidth="1.500" /></svg>
            <Badge>2</Badge>
          </Notice>
        </Tray>
      </TaskBar>
    </Window>
  );
}
